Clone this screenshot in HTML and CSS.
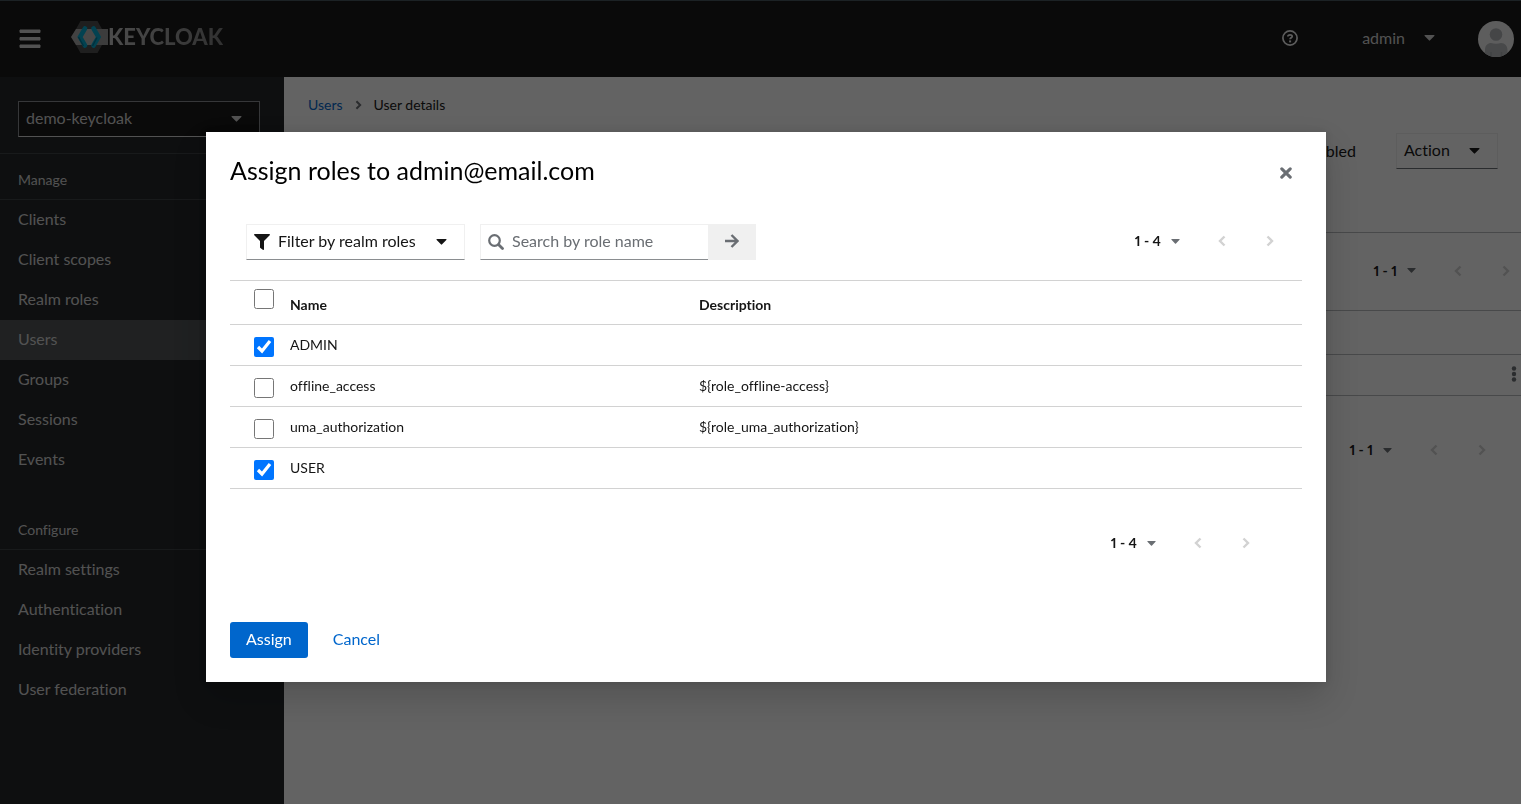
FILE: index.html
```html
<!DOCTYPE html>
<html lang="en">
<head>
<meta charset="utf-8">
<title>Assign roles</title>
<link rel="stylesheet" href="styles.css">
</head>
<body>
<svg class="defs" aria-hidden="true">
  <symbol id="caret" viewBox="0 0 10 6"><path d="M.6 0h8.8c.5 0 .8.6.4 1L5.600 5.300a.8.8 0 0 1-1.200 0L.2 1C-.2.6.1 0 .6 0z"/></symbol>
  <symbol id="left" viewBox="0 0 8 12"><path d="M6.500 1.500 2 6l4.500 4.500" fill="none" stroke="currentColor" stroke-width="2.400"/></symbol>
  <symbol id="right" viewBox="0 0 8 12"><path d="M1.500 1.500 6 6l-4.500 4.500" fill="none" stroke="currentColor" stroke-width="2.400"/></symbol>
</svg>

<header class="masthead">
  <button class="icon-button menu" aria-label="Global navigation">
    <svg width="22" height="20" viewBox="0 0 22 20"><path d="M1 1h20v2.500H1zM1 8.500h20V11H1zM1 16h20v2.500H1z" fill="currentColor" stroke="currentColor" stroke-linejoin="round"/></svg>
  </button>
  <a class="brand" href="#">
    <svg width="37" height="32" viewBox="0 0 37 32" aria-hidden="true">
      <path d="M9.500 0h17l9 16-9 16h-17L.500 16z" fill="#4d4d4d"/>
      <path d="M5 8h32v16H5L0 16z" fill="#a8a8a8"/>
      <path d="M14 8h7l5 8-5 8h-7l-5-8z" fill="#b8b8b8"/>
      <path d="M24 8h13v16H24l5-8z" fill="#999"/>
      <path d="M14 7.500 9 16l5 8.500M22.500 7.500l5 8.500-5 8.500" fill="none" stroke="#00a9d0" stroke-width="4.600" stroke-linecap="round"/>
      <path d="M7.500 16 12.500 25M21.500 25 26 16.500" fill="none" stroke="#007a99" stroke-width="1.500"/>
    </svg>
    <span class="brand-name">KEYCLOAK</span>
  </a>
  <div class="tools">
    <button class="icon-button help" aria-label="Help">
      <svg width="16" height="16" viewBox="0 0 16 16" fill="none" stroke="currentColor"><circle cx="8" cy="8" r="7.100" stroke-width="1.700"/><path d="M5.800 6.500C6 4.200 10.300 4.200 10.200 6.500 10.100 7.900 8.100 7.800 8.100 9.300" stroke-width="1.800"/><path d="M7.100 10.400h2v2h-2z" fill="currentColor" stroke="none"/></svg>
    </button>
    <button class="user">admin <svg class="caret" width="11" height="6"><use href="#caret"/></svg></button>
    <svg class="avatar" width="36" height="36" viewBox="0 0 36 36" role="img" aria-label="Avatar">
      <clipPath id="round"><circle cx="18" cy="18" r="18"/></clipPath>
      <g clip-path="url(#round)"><path d="M0 0h36v36H0z" fill="#f0f0f0"/><circle cx="18" cy="13.500" r="6.300" fill="#b0b3b6"/><path d="M7 36v-7c0-5 3-7 6-7 3 1 7 1 10 0 4 0 6.500 3 6.500 7v7z" fill="#b8bbbe"/><path d="M13 31v5M23.500 31v5" stroke="#a5a8ab" stroke-width="1.500"/></g>
    </svg>
  </div>
</header>

<div class="page">
  <nav class="sidebar" aria-label="Global">
    <div class="realm"><button class="realm-select"><span>demo-keycloak</span> <svg class="caret" width="11" height="6"><use href="#caret"/></svg></button></div>
    <section class="nav-group">
      <h2>Manage</h2>
      <a href="#">Clients</a>
      <a href="#">Client scopes</a>
      <a href="#">Realm roles</a>
      <a href="#" class="current" aria-current="page">Users</a>
      <a href="#">Groups</a>
      <a href="#">Sessions</a>
      <a href="#">Events</a>
    </section>
    <section class="nav-group">
      <h2>Configure</h2>
      <a href="#">Realm settings</a>
      <a href="#">Authentication</a>
      <a href="#">Identity providers</a>
      <a href="#">User federation</a>
    </section>
  </nav>

  <main class="main">
    <div class="breadcrumb"><a href="#">Users</a><svg width="7" height="10"><use href="#right"/></svg><span>User details</span></div>
    <div class="heading">
      <span>Enabled</span>
      <button class="control action"><span>Action</span> <svg class="caret" width="11" height="6"><use href="#caret"/></svg></button>
    </div>
    <div class="list-bar">
      <div class="pagination">
        <button class="range">1 - 1 <svg width="9" height="5"><use href="#caret"/></svg></button>
        <button class="step" disabled aria-label="Previous"><svg width="8" height="12"><use href="#left"/></svg></button>
        <button class="step" disabled aria-label="Next"><svg width="8" height="12"><use href="#right"/></svg></button>
      </div>
    </div>
    <div class="list-head"></div>
    <div class="list-row"><button class="icon-button kebab" aria-label="Actions"><svg width="6" height="16" viewBox="0 0 6 16"><circle cx="3" cy="2.500" r="2.200"/><circle cx="3" cy="8" r="2.200"/><circle cx="3" cy="13.500" r="2.200"/></svg></button></div>
    <div class="list-foot">
      <div class="pagination">
        <button class="range">1 - 1 <svg width="9" height="5"><use href="#caret"/></svg></button>
        <button class="step" disabled aria-label="Previous"><svg width="8" height="12"><use href="#left"/></svg></button>
        <button class="step" disabled aria-label="Next"><svg width="8" height="12"><use href="#right"/></svg></button>
      </div>
    </div>
  </main>
</div>

<div class="backdrop">
  <div class="modal" role="dialog" aria-modal="true" aria-labelledby="modal-title">
    <div class="modal-head">
      <h1 id="modal-title">Assign roles to admin@email.com</h1>
      <button class="icon-button close" aria-label="Close"><svg width="12" height="12" viewBox="0 0 12 12"><path d="m1.800 1.800 8.400 8.400M10.200 1.800l-8.400 8.400" stroke="currentColor" stroke-width="3.100" stroke-linecap="round"/></svg></button>
    </div>
    <div class="toolbar">
      <button class="control filter">
        <svg width="16" height="16" viewBox="0 0 16 16"><path d="M.8 0h14.400c.8 0 1 .8.500 1.300L10 7v8.200c0 .8-.7 1-1.200.6l-2.400-1.700a1 1 0 0 1-.4-.8V7L.3 1.300C-.2.8 0 0 .8 0z" fill="currentColor"/></svg>
        <span>Filter by realm roles</span>
        <svg class="caret" width="11" height="6"><use href="#caret"/></svg>
      </button>
      <div class="search">
        <label class="search-box">
          <svg width="16" height="16" viewBox="0 0 16 16" fill="none" stroke="currentColor"><circle cx="6.500" cy="6.500" r="5.300" stroke-width="2.200"/><path d="m10.700 10.700 3.800 3.800" stroke-width="2.800" stroke-linecap="round"/></svg>
          <input type="search" placeholder="Search by role name" aria-label="Search by role name">
        </label>
        <button class="go" aria-label="Search"><svg width="14" height="14" viewBox="0 0 14 14"><path d="M0 7h12M6.500 1l6 6-6 6" fill="none" stroke="currentColor" stroke-width="2.400"/></svg></button>
      </div>
      <div class="pagination">
        <button class="range">1 - 4 <svg width="9" height="5"><use href="#caret"/></svg></button>
        <button class="step" disabled aria-label="Previous"><svg width="8" height="12"><use href="#left"/></svg></button>
        <button class="step" disabled aria-label="Next"><svg width="8" height="12"><use href="#right"/></svg></button>
      </div>
    </div>
    <table class="roles">
      <thead>
        <tr><th class="pick"><input type="checkbox" aria-label="Select all rows"></th><th class="name">Name</th><th>Description</th></tr>
      </thead>
      <tbody>
        <tr><td class="pick"><input type="checkbox" id="r1" checked></td><td><label for="r1">ADMIN</label></td><td></td></tr>
        <tr><td class="pick"><input type="checkbox" id="r2"></td><td><label for="r2">offline_access</label></td><td>${role_offline-access}</td></tr>
        <tr><td class="pick"><input type="checkbox" id="r3"></td><td><label for="r3">uma_authorization</label></td><td>${role_uma_authorization}</td></tr>
        <tr><td class="pick"><input type="checkbox" id="r4" checked></td><td><label for="r4">USER</label></td><td></td></tr>
      </tbody>
    </table>
    <div class="table-foot">
      <div class="pagination">
        <button class="range">1 - 4 <svg width="9" height="5"><use href="#caret"/></svg></button>
        <button class="step" disabled aria-label="Previous"><svg width="8" height="12"><use href="#left"/></svg></button>
        <button class="step" disabled aria-label="Next"><svg width="8" height="12"><use href="#right"/></svg></button>
      </div>
    </div>
    <div class="modal-foot">
      <button class="primary">Assign</button>
      <button class="link">Cancel</button>
    </div>
  </div>
</div>
</body>
</html>
```
FILE: styles.css
```css
* { box-sizing: border-box; }

body {
  margin: 0;
  min-height: 100vh;
  display: flex;
  flex-direction: column;
  overflow: hidden;
  background: #fff;
  color: #151515;
  font: 16px/24px Lato, "Open Sans", sans-serif;
  font-variant-ligatures: none;
}

button, input { font: inherit; font-variant-ligatures: none; color: inherit; }
button { background: none; border: 0; padding: 0; }
button span { padding-bottom: 2px; }
a { color: #06c; text-decoration: none; }
h1, h2 { margin: 0; font-weight: 400; }
svg { flex: none; display: block; }
.caret, .kebab svg { fill: currentColor; }
.defs { position: absolute; width: 0; height: 0; }
.icon-button { display: flex; align-items: center; justify-content: center; }

/* Masthead */
.masthead {
  display: flex;
  align-items: center;
  height: 77px;
  padding: 0 7px 0 19px;
  border-top: 1px solid #46545c;
  background: #151515;
  color: #d2d2d2;
}
.brand { display: flex; align-items: center; margin: 0 0 4px 30px; }
.brand-name {
  font-size: 22px;
  font-weight: 900;
  line-height: 32px;
  background: linear-gradient(100deg, #c4c4c4, #7a7a7a);
  background-clip: text;
  -webkit-background-clip: text;
  color: transparent;
}
.tools { display: flex; align-items: center; margin-left: auto; }
.help { color: #f0f0f0; margin-bottom: 2px; }
.user { display: flex; align-items: center; gap: 19px; margin: 0 43px 2px 64px; }

/* Sidebar */
.page { display: flex; flex: 1; }
.sidebar { flex: none; width: 284px; background: #212427; color: #d2d2d2; }
.realm { padding: 24px 24px 16px 18px; border-bottom: 1px solid #3c3f42; }
.realm-select {
  display: flex;
  align-items: center;
  justify-content: space-between;
  width: 100%;
  height: 36px;
  padding: 0 17px 0 7px;
  border: 1px solid #8a8d90;
  border-bottom-color: #d2d2d2;
  background: #151515;
}
.nav-group { margin-bottom: 24px; }
.nav-group h2 {
  height: 46px;
  padding: 15px 18px 0;
  border-bottom: 1px solid #3c3f42;
  font-size: 14px;
  line-height: 21px;
}
.nav-group a { display: block; padding: 7px 18px 9px; color: inherit; }
.nav-group .current { background: #4f5255; }

/* User details */
.main { flex: 1; min-width: 0; }
.breadcrumb {
  display: flex;
  align-items: center;
  gap: 12px;
  padding: 17px 24px 19px;
  font-size: 14px;
  line-height: 21px;
}
.breadcrumb svg { color: #6a6e73; }
.heading {
  display: flex;
  align-items: center;
  justify-content: flex-end;
  gap: 40px;
  height: 99px;
  padding: 0 23px 64px 24px;
  border-bottom: 1px solid #b8bbbe;
}
.control {
  display: flex;
  align-items: center;
  height: 36px;
  padding: 0 8px;
  border: 1px solid #f0f0f0;
  border-bottom-color: #8a8d90;
}
.action { gap: 19px; width: 102px; padding: 0 7px; border-bottom-color: #6a6e73; }
.list-bar { display: flex; justify-content: flex-end; height: 78px; border-bottom: 1px solid #b8bbbe; }
.list-bar .pagination { margin-right: -9px; }
.list-head { height: 44px; border-bottom: 1px solid #b8bbbe; }
.list-row { display: flex; justify-content: flex-end; height: 41px; padding: 0 4px 2px 0; border-bottom: 1px solid #b8bbbe; }
.kebab { color: #6a6e73; }
.list-foot { display: flex; justify-content: flex-end; padding: 37px 15px 0; }

/* Pagination */
.pagination { display: flex; align-items: center; color: #151515; padding-bottom: 2px; }
.range {
  display: flex;
  align-items: center;
  gap: 10px;
  padding-right: 18px;
  font-size: 14px;
  font-weight: 700;
  font-variant-numeric: proportional-nums;
  line-height: 34px;
}
.range svg { fill: #6a6e73; }
.step { display: flex; justify-content: center; width: 48px; color: #d2d2d2; }

/* Dialog */
.backdrop {
  position: fixed;
  inset: 0;
  display: flex;
  align-items: center;
  justify-content: center;
  padding: 10px 0 0 11px;
  background: rgba(3, 3, 3, .62);
}
.modal {
  width: 1120px;
  max-width: 94%;
  padding: 24px;
  background: #fff;
  box-shadow: 0 16px 32px rgba(3, 3, 3, .16), 0 0 8px rgba(3, 3, 3, .1);
}
.modal-head { display: flex; align-items: center; justify-content: space-between; padding-right: 10px; }
.modal-head h1 { font-size: 25px; line-height: 29px; padding-bottom: 2px; color: #000; }
.close { width: 12px; padding-top: 3px; color: #6a6e73; }

.toolbar { display: flex; align-items: center; gap: 15px; padding: 37px 8px 20px 16px; }
.filter { gap: 8px; padding: 0 17px 0 7px; width: 219px; }
.filter .caret { margin-left: auto; }
.search { display: flex; }
.search-box {
  display: flex;
  align-items: center;
  gap: 8px;
  width: 228px;
  height: 36px;
  padding: 0 7px;
  border: 1px solid #f0f0f0;
  border-width: 1px 0 1px 1px;
  border-bottom-color: #8a8d90;
  color: #6a6e73;
}
.search-box input { flex: 1; min-width: 0; padding: 0 0 2px; border: 0; outline: 0; background: none; }
.search-box input::placeholder { color: #6a6e73; opacity: 1; }
.go { display: flex; align-items: center; justify-content: center; width: 48px; height: 36px; padding-bottom: 2px; background: #f0f0f0; color: #6a6e73; }
.toolbar .pagination { margin-left: auto; }

.roles { width: 100%; border-collapse: collapse; border-top: 1px solid #d2d2d2; table-layout: fixed; font-size: 14px; line-height: 21px; }
.roles tr { border-bottom: 1px solid #d2d2d2; }
.roles th, .roles td { height: 41px; padding: 0 0 1px; text-align: left; vertical-align: middle; }
.roles th { height: 44px; padding: 4px 0 0; }
.roles .pick { width: 60px; padding-left: 24px; }
.roles td.pick { padding-top: 4px; padding-bottom: 0; }
.roles th.pick { padding: 0 0 7px 24px; }
.roles .name { width: 409px; }
.roles input { display: block; width: 20px; height: 20px; margin: 0; }

.table-foot { display: flex; justify-content: flex-end; padding: 37px 32px 60px; }
.modal-foot { display: flex; align-items: center; gap: 25px; }
.primary { height: 36px; padding: 0 16px 2px; border-radius: 3px; background: #06c; color: #fff; }
.link { padding-bottom: 2px; color: #06c; }
```
